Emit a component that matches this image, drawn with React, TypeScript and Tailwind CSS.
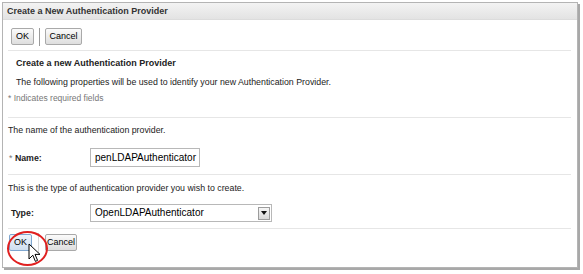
import React from 'react';

const Btn: React.FC<{ label: string; w: string; hot?: boolean }> = ({ label, w, hot }) => (
  <button
    className={
      (hot
        ? 'border-[#7fa6cf] bg-gradient-to-b from-[#eef4fb] to-[#cfdff0] '
        : 'border-[#a9a9a9] bg-gradient-to-b from-[#fbfbfb] to-[#dedede] ') +
      w +
      ' h-[17px] border rounded-[2px] text-[9px] text-black leading-none flex items-center justify-center'
    }
  >
    {label}
  </button>
);

const Rule = () => <div className="h-px bg-[#e6e6e6] mr-[6px]" />;

const App: React.FC = () => {
  return (
    <div className="w-[583px] h-[274px] bg-white pt-[2px] pl-[2px] font-['Liberation_Sans',Arial,sans-serif] text-[8.8px] leading-[10px] text-[#222]">
      <div className="relative w-[576px] h-[266px] border border-[#b4b4b4] shadow-[2px_2px_0_#a8a8a8] bg-white">
        <div className="h-[17px] flex items-center px-[4px] bg-gradient-to-b from-[#f3f3f3] to-[#e3e3e3] border-b border-[#dcdcdc] font-bold text-[9px] text-[#333]">
          Create a New Authentication Provider
        </div>

        <div className="pl-[5px]">
          <div className="flex items-center mt-[8px] h-[17px] pl-[3px]">
            <Btn label="OK" w="w-[23px]" />
            <div className="w-px h-[18px] bg-[#9a9a9a] mx-[5px]" />
            <Btn label="Cancel" w="w-[37px]" />
          </div>
          <div className="mt-[5px]">
            <Rule />
          </div>

          <div className="pl-[8px] mt-[7px] font-bold text-[9px] text-[#222]">
            Create a new Authentication Provider
          </div>
          <div className="pl-[8px] mt-[9px]">
            The following properties will be used to identify your new Authentication Provider.
          </div>
          <div className="mt-[6px] text-[8.5px] text-[#777]">* Indicates required fields</div>
          <div className="mt-[14px]">
            <Rule />
          </div>

          <div className="mt-[7px]">The name of the authentication provider.</div>
          <div className="flex items-center mt-[13px] h-[19px]">
            <div className="w-[82px] pl-[1px] font-bold text-[#222]">
              <span className="text-[#777] font-normal">* </span>Name:
            </div>
            <div className="w-[110px] h-[19px] border border-[#b8b8b8] flex items-center pl-[4px] text-[10px] text-black overflow-hidden whitespace-nowrap">
              penLDAPAuthenticator
            </div>
          </div>
          <div className="mt-[7px]">
            <Rule />
          </div>

          <div className="mt-[8px]">This is the type of authentication provider you wish to create.</div>
          <div className="flex items-center mt-[11px] h-[18px]">
            <div className="w-[82px] pl-[3px] font-bold text-[#222]">Type:</div>
            <div className="w-[182px] h-[18px] border border-[#b8b8b8] flex items-center justify-between pl-[4px] pr-[1px] text-[10px] text-black">
              <span>OpenLDAPAuthenticator</span>
              <div className="w-[12px] h-[13px] border border-[#9c9c9c] bg-gradient-to-b from-[#f6f6f6] to-[#d8d8d8] flex items-center justify-center">
                <svg width="6" height="4" viewBox="0 0 6 4">
                  <path d="M0 0H6L3 4Z" fill="#111" />
                </svg>
              </div>
            </div>
          </div>
          <div className="mt-[6px]">
            <Rule />
          </div>

          <div className="flex items-center mt-[5px] pl-[1px] h-[17px]">
            <Btn label="OK" w="w-[23px]" hot />
            <div className="w-px h-[20px] bg-[#d8d8d8] mx-[6px]" />
            <Btn label="Cancel" w="w-[32px]" />
          </div>
        </div>

        <div className="absolute left-[4px] top-[228px] w-[41px] h-[35px] rounded-[50%] border-2 border-[#e02020]" />
        <svg className="absolute left-[25px] top-[240px]" width="13" height="21" viewBox="0 0 13 21">
          <path
            d="M1 1L1 16L4.8 12.2L7.4 18.4L9.6 17.4L7 11.4L12 11.4Z"
            fill="#fff"
            stroke="#000"
            strokeWidth="1"
            strokeLinejoin="round"
          />
        </svg>
      </div>
    </div>
  );
};

export default App;
